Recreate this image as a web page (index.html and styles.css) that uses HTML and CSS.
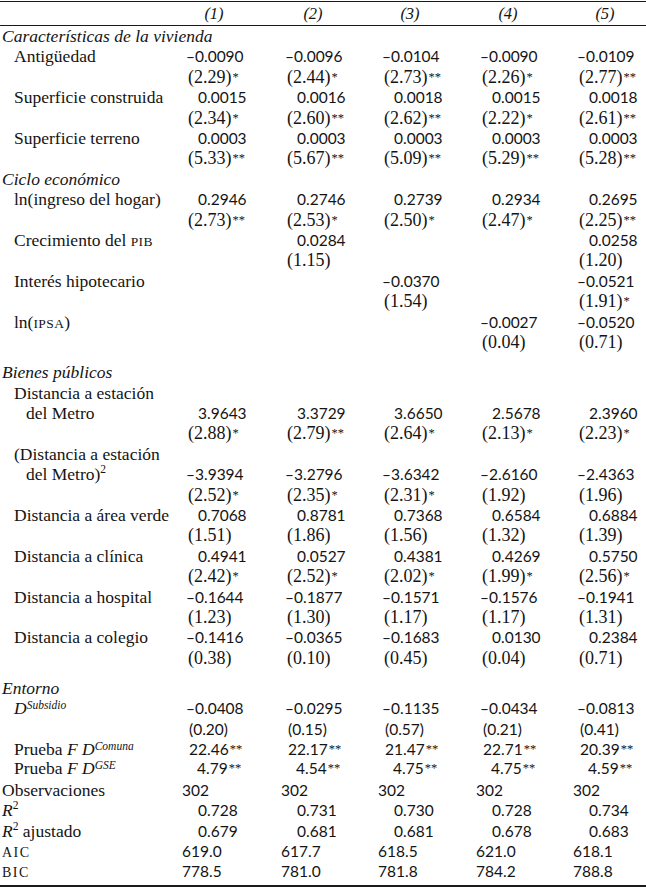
FILE: index.html
```html
<!DOCTYPE html>
<html lang="es">
<head>
<meta charset="utf-8">
<title>Tabla de regresión</title>
<link rel="stylesheet" href="styles.css">
</head>
<body>
<table class="reg">
<colgroup>
<col class="c0"><col class="c1"><col class="c2"><col class="c3"><col class="c4"><col class="c5">
</colgroup>
<thead>
<tr><th></th><th><span class="h">(1)</span></th><th><span class="h">(2)</span></th><th><span class="h">(3)</span></th><th><span class="h">(4)</span></th><th><span class="h">(5)</span></th></tr>
</thead>
<tbody>
<tr><td class="sec" colspan="6">Características de la vivienda</td></tr>
<tr><td class="it">Antigüedad</td><td class="n">–0.0090</td><td class="n">–0.0096</td><td class="n">–0.0104</td><td class="n">–0.0090</td><td class="n">–0.0109</td></tr>
<tr><td></td><td class="t">(2.29)<span class="st">*</span></td><td class="t">(2.44)<span class="st">*</span></td><td class="t">(2.73)<span class="st">**</span></td><td class="t">(2.26)<span class="st">*</span></td><td class="t">(2.77)<span class="st">**</span></td></tr>
<tr><td class="it">Superficie construida</td><td class="p">0.0015</td><td class="p">0.0016</td><td class="p">0.0018</td><td class="p">0.0015</td><td class="p">0.0018</td></tr>
<tr><td></td><td class="t">(2.34)<span class="st">*</span></td><td class="t">(2.60)<span class="st">**</span></td><td class="t">(2.62)<span class="st">**</span></td><td class="t">(2.22)<span class="st">*</span></td><td class="t">(2.61)<span class="st">**</span></td></tr>
<tr><td class="it">Superficie terreno</td><td class="p">0.0003</td><td class="p">0.0003</td><td class="p">0.0003</td><td class="p">0.0003</td><td class="p">0.0003</td></tr>
<tr><td></td><td class="t">(5.33)<span class="st">**</span></td><td class="t">(5.67)<span class="st">**</span></td><td class="t">(5.09)<span class="st">**</span></td><td class="t">(5.29)<span class="st">**</span></td><td class="t">(5.28)<span class="st">**</span></td></tr>

<tr><td class="sec" colspan="6">Ciclo económico</td></tr>
<tr><td class="it">ln(ingreso del hogar)</td><td class="p">0.2946</td><td class="p">0.2746</td><td class="p">0.2739</td><td class="p">0.2934</td><td class="p">0.2695</td></tr>
<tr><td></td><td class="t">(2.73)<span class="st">**</span></td><td class="t">(2.53)<span class="st">*</span></td><td class="t">(2.50)<span class="st">*</span></td><td class="t">(2.47)<span class="st">*</span></td><td class="t">(2.25)<span class="st">**</span></td></tr>
<tr><td class="it">Crecimiento del <span class="sc">PIB</span></td><td></td><td class="p">0.0284</td><td></td><td></td><td class="p">0.0258</td></tr>
<tr><td></td><td></td><td class="t">(1.15)</td><td></td><td></td><td class="t">(1.20)</td></tr>
<tr><td class="it">Interés hipotecario</td><td></td><td></td><td class="n">–0.0370</td><td></td><td class="n">–0.0521</td></tr>
<tr><td></td><td></td><td></td><td class="t">(1.54)</td><td></td><td class="t">(1.91)<span class="st">*</span></td></tr>
<tr><td class="it">ln(<span class="sc">IPSA</span>)</td><td></td><td></td><td></td><td class="n">–0.0027</td><td class="n">–0.0520</td></tr>
<tr><td></td><td></td><td></td><td></td><td class="t">(0.04)</td><td class="t">(0.71)</td></tr>
<tr class="gap"><td colspan="6"></td></tr>

<tr><td class="sec" colspan="6">Bienes públicos</td></tr>
<tr><td class="it" colspan="6">Distancia a estación</td></tr>
<tr><td class="it2">del Metro</td><td class="p">3.9643</td><td class="p">3.3729</td><td class="p">3.6650</td><td class="p">2.5678</td><td class="p">2.3960</td></tr>
<tr><td></td><td class="t">(2.88)<span class="st">*</span></td><td class="t">(2.79)<span class="st">**</span></td><td class="t">(2.64)<span class="st">*</span></td><td class="t">(2.13)<span class="st">*</span></td><td class="t">(2.23)<span class="st">*</span></td></tr>
<tr><td class="it" colspan="6">(Distancia a estación</td></tr>
<tr><td class="it2">del Metro)<sup class="sq">2</sup></td><td class="n">–3.9394</td><td class="n">–3.2796</td><td class="n">–3.6342</td><td class="n">–2.6160</td><td class="n">–2.4363</td></tr>
<tr><td></td><td class="t">(2.52)<span class="st">*</span></td><td class="t">(2.35)<span class="st">*</span></td><td class="t">(2.31)<span class="st">*</span></td><td class="t">(1.92)</td><td class="t">(1.96)</td></tr>
<tr><td class="it">Distancia a área verde</td><td class="p">0.7068</td><td class="p">0.8781</td><td class="p">0.7368</td><td class="p">0.6584</td><td class="p">0.6884</td></tr>
<tr><td></td><td class="t">(1.51)</td><td class="t">(1.86)</td><td class="t">(1.56)</td><td class="t">(1.32)</td><td class="t">(1.39)</td></tr>
<tr><td class="it">Distancia a clínica</td><td class="p">0.4941</td><td class="p">0.0527</td><td class="p">0.4381</td><td class="p">0.4269</td><td class="p">0.5750</td></tr>
<tr><td></td><td class="t">(2.42)<span class="st">*</span></td><td class="t">(2.52)<span class="st">*</span></td><td class="t">(2.02)<span class="st">*</span></td><td class="t">(1.99)<span class="st">*</span></td><td class="t">(2.56)<span class="st">*</span></td></tr>
<tr><td class="it">Distancia a hospital</td><td class="n">–0.1644</td><td class="n">–0.1877</td><td class="n">–0.1571</td><td class="n">–0.1576</td><td class="n">–0.1941</td></tr>
<tr><td></td><td class="t">(1.23)</td><td class="t">(1.30)</td><td class="t">(1.17)</td><td class="t">(1.17)</td><td class="t">(1.31)</td></tr>
<tr><td class="it">Distancia a colegio</td><td class="n">–0.1416</td><td class="n">–0.0365</td><td class="n">–0.1683</td><td class="p">0.0130</td><td class="p">0.2384</td></tr>
<tr><td></td><td class="t">(0.38)</td><td class="t">(0.10)</td><td class="t">(0.45)</td><td class="t">(0.04)</td><td class="t">(0.71)</td></tr>
<tr class="gap"><td colspan="6"></td></tr>

<tr><td class="sec" colspan="6">Entorno</td></tr>
<tr><td class="it"><i>D</i><sup class="sx">Subsidio</sup></td><td class="n">–0.0408</td><td class="n">–0.0295</td><td class="n">–0.1135</td><td class="n">–0.0434</td><td class="n">–0.0813</td></tr>
<tr><td></td><td class="ts">(0.20)</td><td class="ts">(0.15)</td><td class="ts">(0.57)</td><td class="ts">(0.21)</td><td class="ts">(0.41)</td></tr>
<tr><td class="it">Prueba <i>F D</i><sup class="sx">Comuna</sup></td><td class="cf">22.46<span class="st">**</span></td><td class="cf">22.17<span class="st">**</span></td><td class="cf">21.47<span class="st">**</span></td><td class="cf">22.71<span class="st">**</span></td><td class="cf">20.39<span class="st">**</span></td></tr>
<tr class="up"><td class="it">Prueba <i>F D</i><sup class="sx">GSE</sup></td><td class="gf">4.79<span class="st">**</span></td><td class="gf">4.54<span class="st">**</span></td><td class="gf">4.75<span class="st">**</span></td><td class="gf">4.75<span class="st">**</span></td><td class="gf">4.59<span class="st">**</span></td></tr>
<tr><td class="top">Observaciones</td><td class="o">302</td><td class="o">302</td><td class="o">302</td><td class="o">302</td><td class="o">302</td></tr>
<tr><td class="top"><i>R</i><sup class="sq">2</sup></td><td class="r">0.728</td><td class="r">0.731</td><td class="r">0.730</td><td class="r">0.728</td><td class="r">0.734</td></tr>
<tr><td class="top"><i>R</i><sup class="sq">2</sup> ajustado</td><td class="r">0.679</td><td class="r">0.681</td><td class="r">0.681</td><td class="r">0.678</td><td class="r">0.683</td></tr>
<tr><td class="top"><span class="sc sw">AIC</span></td><td class="o">619.0</td><td class="o">617.7</td><td class="o">618.5</td><td class="o">621.0</td><td class="o">618.1</td></tr>
<tr class="last"><td class="top"><span class="sc sw">BIC</span></td><td class="o">778.5</td><td class="o">781.0</td><td class="o">781.8</td><td class="o">784.2</td><td class="o">788.8</td></tr>
</tbody>
</table>
</body>
</html>
```

FILE: styles.css
```css
html, body {
  margin: 0;
  padding: 0;
  background: #ffffff;
}

body {
  color: #141414;
  font-family: "Liberation Serif", "DejaVu Serif", serif;
  font-size: 17.5px;
}

.reg {
  width: 646px;
  table-layout: fixed;
  border-collapse: collapse;
  margin-top: 1px;
  border-top: 1px solid #1a1a1a;
  border-bottom: 2px solid #1a1a1a;
}

.c0 { width: 186px; }
.c1 { width: 99px; }
.c2 { width: 97px; }
.c3 { width: 98px; }
.c4 { width: 97px; }
.c5 { width: 69px; }

thead th {
  height: 23px;
  padding: 0;
  border-bottom: 1px solid #1a1a1a;
  font-weight: normal;
  font-style: italic;
  font-size: 16.5px;
  text-align: left;
  vertical-align: middle;
}

.h {
  display: inline-block;
  width: 56px;
  text-align: center;
}

td {
  height: 20.4px;
  padding: 0;
  line-height: 20.4px;
  white-space: nowrap;
  vertical-align: middle;
  text-align: left;
}

.gap td {
  height: 9.6px;
  line-height: 9.6px;
}

.sec { padding-left: 2px; font-style: italic; }
.it { padding-left: 14px; }
.it2 { padding-left: 26px; }
.top { padding-left: 2px; }

.n, .p, .ts, .cf, .gf, .o, .r {
  font-family: Lato, "Open Sans", sans-serif;
  font-size: 15.5px;
  font-weight: 400;
}

.t {
  padding-left: 2px;
  font-size: 18px;
}

.p { padding-left: 12px; }
.ts { padding-left: 3px; }
.cf { padding-left: 3px; }
.gf { padding-left: 11px; }
.o { text-indent: -4px; }
.r { padding-left: 12px; }

.st {
  font-family: "Liberation Serif", serif;
  font-size: 12.5px;
  font-weight: 400;
  vertical-align: 2px;
  line-height: 0;
  margin-left: 1px;
}

.sc {
  font-size: 13.5px;
  letter-spacing: 0.4px;
  line-height: 0;
}

.sw {
  font-size: 14px;
  letter-spacing: 1.5px;
}

.sq {
  font-size: 11.5px;
  line-height: 0;
  vertical-align: 7px;
}

.sx {
  font-size: 11.5px;
  font-style: italic;
  line-height: 0;
  vertical-align: 5px;
}

.up td {
  vertical-align: top;
  line-height: 18.4px;
}

.last td {
  height: 20.4px;
  padding-bottom: 3px;
}
```
